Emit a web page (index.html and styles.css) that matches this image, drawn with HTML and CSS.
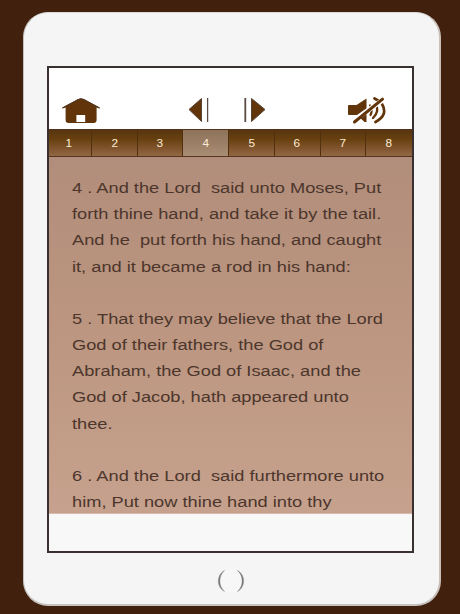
FILE: index.html
```
<!DOCTYPE html>
<html lang="en">
<head>
    <meta charset="UTF-8">
    <meta name="viewport" content="width=device-width, initial-scale=1.0">
    <title>Exodus 4</title>
    <link rel="stylesheet" href="styles.css">
</head>
<body>

    <div class="tablet">
        <div class="screen">
            <!-- Toolbar -->
            <div class="toolbar">
                <svg class="icon-home" width="40" height="28" viewBox="0 0 40 28">
                    <path d="M17 2.2Q20 .7 23 2.2L38.8 10.5L38.2 11.5L35.6 10.6V23Q35.6 26 32.6 26H7.6Q4.6 26 4.6 23V10.6L1.8 11.5L1.2 10.5Z" fill="#613509"/>
                    <path d="M1.5 11L17 2.5Q20 1 23 2.5L38.5 11" fill="none" stroke="#4c3423" stroke-width="1"/>
                    <path d="M15.4 18H24.2V25H15.4Z" fill="#fff"/>
                </svg>
                <svg class="icon-prev" width="22" height="26" viewBox="0 0 22 26">
                    <path d="M1 12.5L13.5 1.5V24.5Z" fill="#613509" stroke="#574334" stroke-width="1" stroke-linejoin="round"/>
                    <path d="M19.6 1V25" stroke="#594b43" stroke-width="1.3"/>
                </svg>
                <svg class="icon-next" width="23" height="26" viewBox="0 0 23 26">
                    <path d="M22 12.5L8.5 1.5V24.5Z" fill="#613509" stroke="#574334" stroke-width="1" stroke-linejoin="round"/>
                    <path d="M2.3 1V25" stroke="#594b43" stroke-width="1.8"/>
                </svg>
                <svg class="icon-mute" width="42" height="28" viewBox="0 0 42 28">
                    <path d="M3 8H10.5L20.5 1.5V25L18.5 25L11 18H3Q2 18 2 17V9Q2 8 3 8Z" fill="#613509"/>
                    <g fill="none" stroke="#613509" stroke-linecap="round">
                        <path d="M24 8.5Q27 13 24.5 18" stroke-width="2.2"/>
                        <path d="M29.5 7Q34 14 27 21" stroke-width="2.4"/>
                        <path d="M28.5 1.5L32 3.5M36 7Q42.5 18 29.5 25" stroke-width="2.7"/>
                    </g>
                    <path d="M6 24.5L36 3.5" stroke="#fff" stroke-width="5"/>
                    <path d="M8.5 25L36.5 2.2" stroke="#613509" stroke-width="3" stroke-linecap="round"/>
                </svg>
            </div>

            <!-- Chapters -->
            <div class="chapters">
                <span class="chapter"><b>1</b></span>
                <span class="chapter"><b>2</b></span>
                <span class="chapter"><b>3</b></span>
                <span class="chapter active"><b>4</b></span>
                <span class="chapter"><b>5</b></span>
                <span class="chapter"><b>6</b></span>
                <span class="chapter"><b>7</b></span>
                <span class="chapter"><b>8</b></span>
            </div>

            <!-- Verses -->
            <div class="reader">
                <p class="verse">4 . And the Lord  said unto Moses, Put
forth thine hand, and take it by the tail.
And he  put forth his hand, and caught
it, and it became a rod in his hand:</p>
                <p class="verse">5 . That they may believe that the Lord
God of their fathers, the God of
Abraham, the God of Isaac, and the
God of Jacob, hath appeared unto
thee.</p>
                <p class="verse">6 . And the Lord  said furthermore unto
him, Put now thine hand into thy</p>
            </div>
            <div class="footer"></div>
        </div>
        <svg class="home-button" width="30" height="26" viewBox="0 0 30 26">
            <ellipse cx="15" cy="13" rx="13" ry="12" fill="#f8f7f7"/>
            <path d="M8.5 2.5C.3 7 .3 19 8.5 23.5C2.3 18 2.3 8 8.5 2.5ZM21.5 2.5C29.7 7 29.7 19 21.5 23.5C27.7 18 27.7 8 21.5 2.5Z" fill="#777575" stroke="#777575" stroke-width=".4"/>
        </svg>
    </div>

</body>
</html>
```
FILE: styles.css
```
body {
    font-family: "Liberation Sans", Arial, sans-serif;
    background-color: #41210d;
    margin: 0;
    height: 614px;
    overflow: hidden;
}

.tablet {
    box-sizing: border-box;
    width: 418px;
    height: 594px;
    margin: 12px 0 0 23px;
    padding: 53px 0 0 23px;
    background-color: #f5f5f5;
    border-style: solid;
    border-width: 1px 2px 2px 1px;
    border-color: #dedad7 #c9bfb9 #c9c3bf #c4c1bf;
    border-radius: 25px;
}

.screen {
    box-sizing: border-box;
    display: flex;
    flex-direction: column;
    width: 367px;
    height: 487px;
    border: 2px solid #39312f;
    background-color: #fff;
}

.toolbar {
    display: flex;
    align-items: flex-start;
    height: 61px;
    padding: 29px 23px 0 12px;
    box-sizing: border-box;
}

.icon-home {
    margin-right: 87px;
}

.icon-prev {
    margin-right: 33px;
}

.icon-next {
    margin-right: 80px;
}

.toolbar svg {
    flex: none;
}

.chapters {
    display: grid;
    grid-template-columns: 43px repeat(7, 1fr);
    height: 28px;
    box-sizing: border-box;
    border-top: 1px solid #54331a;
    border-bottom: 1px solid #58331d;
}

.chapter {
    display: flex;
    align-items: center;
    justify-content: center;
    color: #fcecd4;
    font-size: 10px;
    border-right: 1px solid #51300f;
    background: linear-gradient(#573511, #68400f 35%, #835731 75%, #916944);
}

.chapter b {
    font-weight: normal;
    transform: scaleX(1.18);
}

.chapter:first-child {
    padding-right: 3px;
}

.chapter:last-child {
    border-right: none;
}

.chapter.active {
    background: linear-gradient(#8f735b, #9a7e65 50%, #a98e76);
}

.reader {
    height: 357px;
    box-sizing: border-box;
    overflow: hidden;
    padding: 18px 0 0 23px;
    background: linear-gradient(#b18d7b, #bb957f 45%, #c6a18d);
    border-bottom: 1px solid #d4bbae;
}

.verse {
    margin: 0 0 26.2px;
    width: 280px;
    font-size: 15.4px;
    line-height: 26.17px;
    color: #4c362c;
    white-space: pre;
    transform: scaleX(1.185);
    transform-origin: left top;
}

.footer {
    flex: 1;
    background-color: #f8f8f8;
}

.home-button {
    display: block;
    margin: 15px 0 0 169px;
}
```
